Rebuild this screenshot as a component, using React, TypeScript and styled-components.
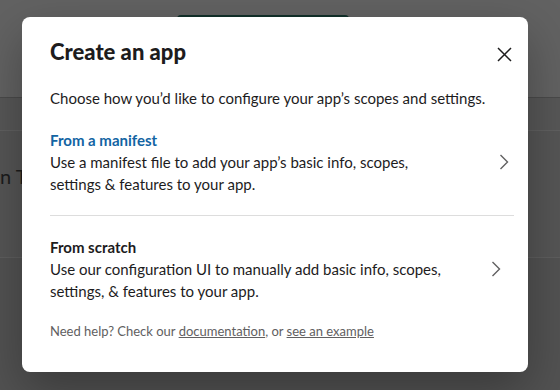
import React from "react";
import styled, { createGlobalStyle } from "styled-components";

const GlobalStyle = createGlobalStyle`
  body {
    margin: 0;
    background: #535353;
    font-family: Lato, "Noto Sans", sans-serif;
  }
`;

const Page = styled.div`
  position: relative;
  width: 560px;
  height: 390px;
  overflow: hidden;
  display: flex;
  flex-direction: column;
`;

const TopBar = styled.div`
  height: 97px;
  background: #626262;
  border-bottom: 1px solid #4a4a4a;
  padding-left: 177px;
`;

const GreenButton = styled.div`
  margin-top: 15px;
  width: 172px;
  height: 36px;
  background: #12302a;
  border-radius: 4px;
`;

const Band = styled.div`
  height: 32px;
  background: #575757;
  border-bottom: 1px solid #606060;
`;

const Section = styled.div`
  height: 127px;
  box-sizing: border-box;
  padding-top: 33px;
  background: #555555;
  border-bottom: 1px solid #5e5e5e;
`;

const PageText = styled.div`
  font-size: 20px;
  line-height: 24px;
  color: #1c1c1c;
  white-space: nowrap;
`;

const Rest = styled.div`
  flex: 1;
  background: #525252;
`;

const Modal = styled.div`
  position: absolute;
  top: 17px;
  left: 22px;
  width: 506px;
  height: 355px;
  box-sizing: border-box;
  padding: 20px 14px 0 28px;
  background: #fff;
  border-radius: 8px;
  box-shadow: 0 18px 48px rgba(0, 0, 0, 0.3);
  color: #1d1c1d;
`;

const Header = styled.div`
  display: flex;
  align-items: center;
  justify-content: space-between;
  height: 30px;
`;

const Title = styled.h1`
  margin: 0;
  font-size: 22px;
  line-height: 30px;
  font-weight: 900;
`;

const CloseButton = styled.button`
  display: flex;
  align-items: center;
  justify-content: center;
  width: 28px;
  height: 28px;
  margin: 4px -4px 0 0;
  padding: 0;
  border: none;
  background: none;
  color: #1d1c1d;
`;

const Intro = styled.p`
  margin: 20px 0 0;
  font-size: 15px;
  line-height: 22px;
`;

const Option = styled.div<{ $divider?: boolean }>`
  display: flex;
  align-items: center;
  padding: 20px 0;
  border-bottom: ${(p) => (p.$divider ? "1px solid #dddddd" : "none")};
`;

const OptionText = styled.div`
  flex: 1;
  font-size: 15px;
  line-height: 22px;
`;

const OptionTitle = styled.div<{ $link?: boolean }>`
  font-weight: 700;
  color: ${(p) => (p.$link ? "#1264a3" : "#1d1c1d")};
`;

const OptionDesc = styled.div`
  width: 405px;
`;

const Chevron = styled.svg<{ $inset: number }>`
  margin-right: ${(p) => p.$inset}px;
  color: #616061;
`;

const Footer = styled.p`
  margin: 0;
  font-size: 13px;
  line-height: 18px;
  color: #616061;

  a {
    color: #616061;
    text-decoration: underline;
  }
`;

const ChevronIcon: React.FC<{ inset: number }> = ({ inset }) => (
  <Chevron $inset={inset} width="10" height="16" viewBox="0 0 10 16">
    <path d="M1.5 1 L8.5 8 L1.5 15" fill="none" stroke="currentColor" strokeWidth="1.4" />
  </Chevron>
);

export default function App() {
  return (
    <>
      <GlobalStyle />
      <Page>
        <TopBar>
          <GreenButton />
        </TopBar>
        <Band />
        <Section>
          <PageText>n T</PageText>
        </Section>
        <Rest />

        <Modal>
          <Header>
            <Title>Create an app</Title>
            <CloseButton aria-label="Close">
              <svg width="15" height="15" viewBox="0 0 15 15">
                <path d="M1 1 L14 14 M14 1 L1 14" stroke="currentColor" strokeWidth="1.5" />
              </svg>
            </CloseButton>
          </Header>
          <Intro>Choose how you’d like to configure your app’s scopes and settings.</Intro>

          <Option $divider>
            <OptionText>
              <OptionTitle $link>From a manifest</OptionTitle>
              <OptionDesc>
                Use a manifest file to add your app’s basic info, scopes, settings &amp; features to your app.
              </OptionDesc>
            </OptionText>
            <ChevronIcon inset={5} />
          </Option>

          <Option>
            <OptionText>
              <OptionTitle>From scratch</OptionTitle>
              <OptionDesc>
                Use our configuration UI to manually add basic info, scopes, settings, &amp; features to your app.
              </OptionDesc>
            </OptionText>
            <ChevronIcon inset={13} />
          </Option>

          <Footer>
            Need help? Check our <a href="#">documentation</a>, or <a href="#">see an example</a>
          </Footer>
        </Modal>
      </Page>
    </>
  );
}
